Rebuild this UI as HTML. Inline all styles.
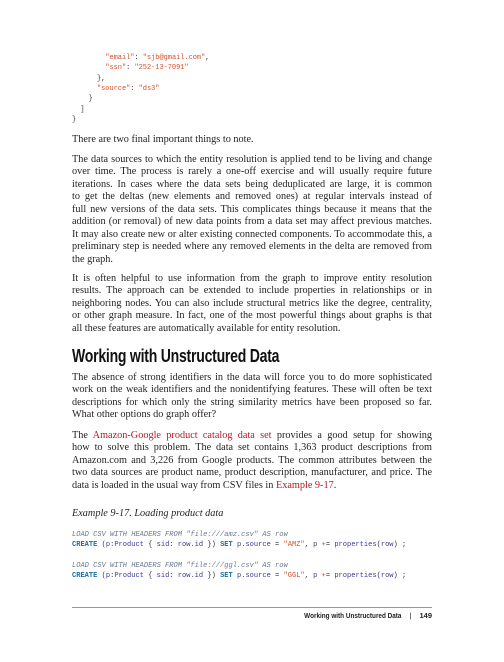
<!DOCTYPE html>
<html><head><meta charset="utf-8"><style>
body{margin:0;width:504px;height:662px;background:#fff;position:relative;overflow:hidden;font-family:"Liberation Serif",serif;color:#231f20}
.a{position:absolute;left:72px;width:360px;white-space:nowrap}
.j{text-align:justify;text-align-last:justify;white-space:normal;word-spacing:-0.4px}
.t{font-size:10.25px;line-height:12.45px}
.c{font-family:"Liberation Mono",monospace;font-size:7.05px;line-height:10.35px;white-space:pre;color:#333}
.s{color:#d4502a}.k{color:#1a6fa0;font-weight:bold}.b{color:#3a3a9a}.cm{color:#6a7a8a;font-style:italic}
.r{color:#b01c24}
h2{position:absolute;left:72px;top:345px;margin:0;font-family:"Liberation Sans",sans-serif;font-weight:bold;font-size:18px;line-height:22px;transform:scaleX(0.78);transform-origin:left;letter-spacing:-0.3px;color:#111;white-space:nowrap}
</style></head><body>
<div class="a c" style="top:53px;font-size:6.95px">        <span class="s">"email"</span>: <span class="s">"sjb@gmail.com"</span>,
        <span class="s">"ssn"</span>: <span class="s">"252-13-7091"</span>
      },
      <span class="s">"source"</span>: <span class="s">"ds3"</span>
    }
  ]
}</div>
<div class="a t" style="top:134px">There are two final important things to note.</div>
<div class="a t" style="top:154px">
<div class="j">The data sources to which the entity resolution is applied tend to be living and change</div>
<div class="j">over time. The process is rarely a one-off exercise and will usually require future</div>
<div class="j">iterations. In cases where the data sets being deduplicated are large, it is common</div>
<div class="j">to get the deltas (new elements and removed ones) at regular intervals instead of</div>
<div class="j">full new versions of the data sets. This complicates things because it means that the</div>
<div class="j">addition (or removal) of new data points from a data set may affect previous matches.</div>
<div class="j">It may also create new or alter existing connected components. To accommodate this, a</div>
<div class="j">preliminary step is needed where any removed elements in the delta are removed from</div>
<div>the graph.</div>
</div>
<div class="a t" style="top:273px">
<div class="j">It is often helpful to use information from the graph to improve entity resolution</div>
<div class="j">results. The approach can be extended to include properties in relationships or in</div>
<div class="j">neighboring nodes. You can also include structural metrics like the degree, centrality,</div>
<div class="j">or other graph measure. In fact, one of the most powerful things about graphs is that</div>
<div>all these features are automatically available for entity resolution.</div>
</div>
<h2>Working with Unstructured Data</h2>
<div class="a t" style="top:372px">
<div class="j">The absence of strong identifiers in the data will force you to do more sophisticated</div>
<div class="j">work on the weak identifiers and the nonidentifying features. These will often be text</div>
<div class="j">descriptions for which only the string similarity metrics have been proposed so far.</div>
<div>What other options do graph offer?</div>
</div>
<div class="a t" style="top:430px">
<div class="j">The <span class="r">Amazon-Google product catalog data set</span> provides a good setup for showing</div>
<div class="j">how to solve this problem. The data set contains 1,363 product descriptions from</div>
<div class="j">Amazon.com and 3,226 from Google products. The common attributes between the</div>
<div class="j">two data sources are product name, product description, manufacturer, and price. The</div>
<div>data is loaded in the usual way from CSV files in <span class="r">Example 9-17</span>.</div>
</div>
<div class="a t" style="top:508px;font-style:italic">Example 9-17. Loading product data</div>
<div class="a c" style="top:530px"><span class="cm">LOAD CSV WITH HEADERS FROM "file:///amz.csv" AS row</span>
<span class="k">CREATE</span> (<span class="b">p</span>:<span class="b">Product</span> { <span class="b">sid</span>: <span class="b">row.id</span> }) <span class="k">SET</span> <span class="b">p.source</span> = <span class="s">"AMZ"</span>, <span class="b">p</span> <span class="s">+</span>= <span class="b">properties</span>(<span class="b">row</span>) ;

<span class="cm">LOAD CSV WITH HEADERS FROM "file:///ggl.csv" AS row</span>
<span class="k">CREATE</span> (<span class="b">p</span>:<span class="b">Product</span> { <span class="b">sid</span>: <span class="b">row.id</span> }) <span class="k">SET</span> <span class="b">p.source</span> = <span class="s">"GGL"</span>, <span class="b">p</span> <span class="s">+</span>= <span class="b">properties</span>(<span class="b">row</span>) ;</div>
<div style="position:absolute;left:72px;width:360px;top:607px;height:1px;background:#999"></div>
<div style="position:absolute;right:72px;top:611px;font-family:'Liberation Sans',sans-serif;font-weight:bold;font-size:7.5px;color:#222;white-space:nowrap"><span style="display:inline-block;transform:scaleX(0.85);transform-origin:right">Working with Unstructured Data</span><span style="margin:0 8px;font-weight:normal">|</span>149</div>
</body></html>
